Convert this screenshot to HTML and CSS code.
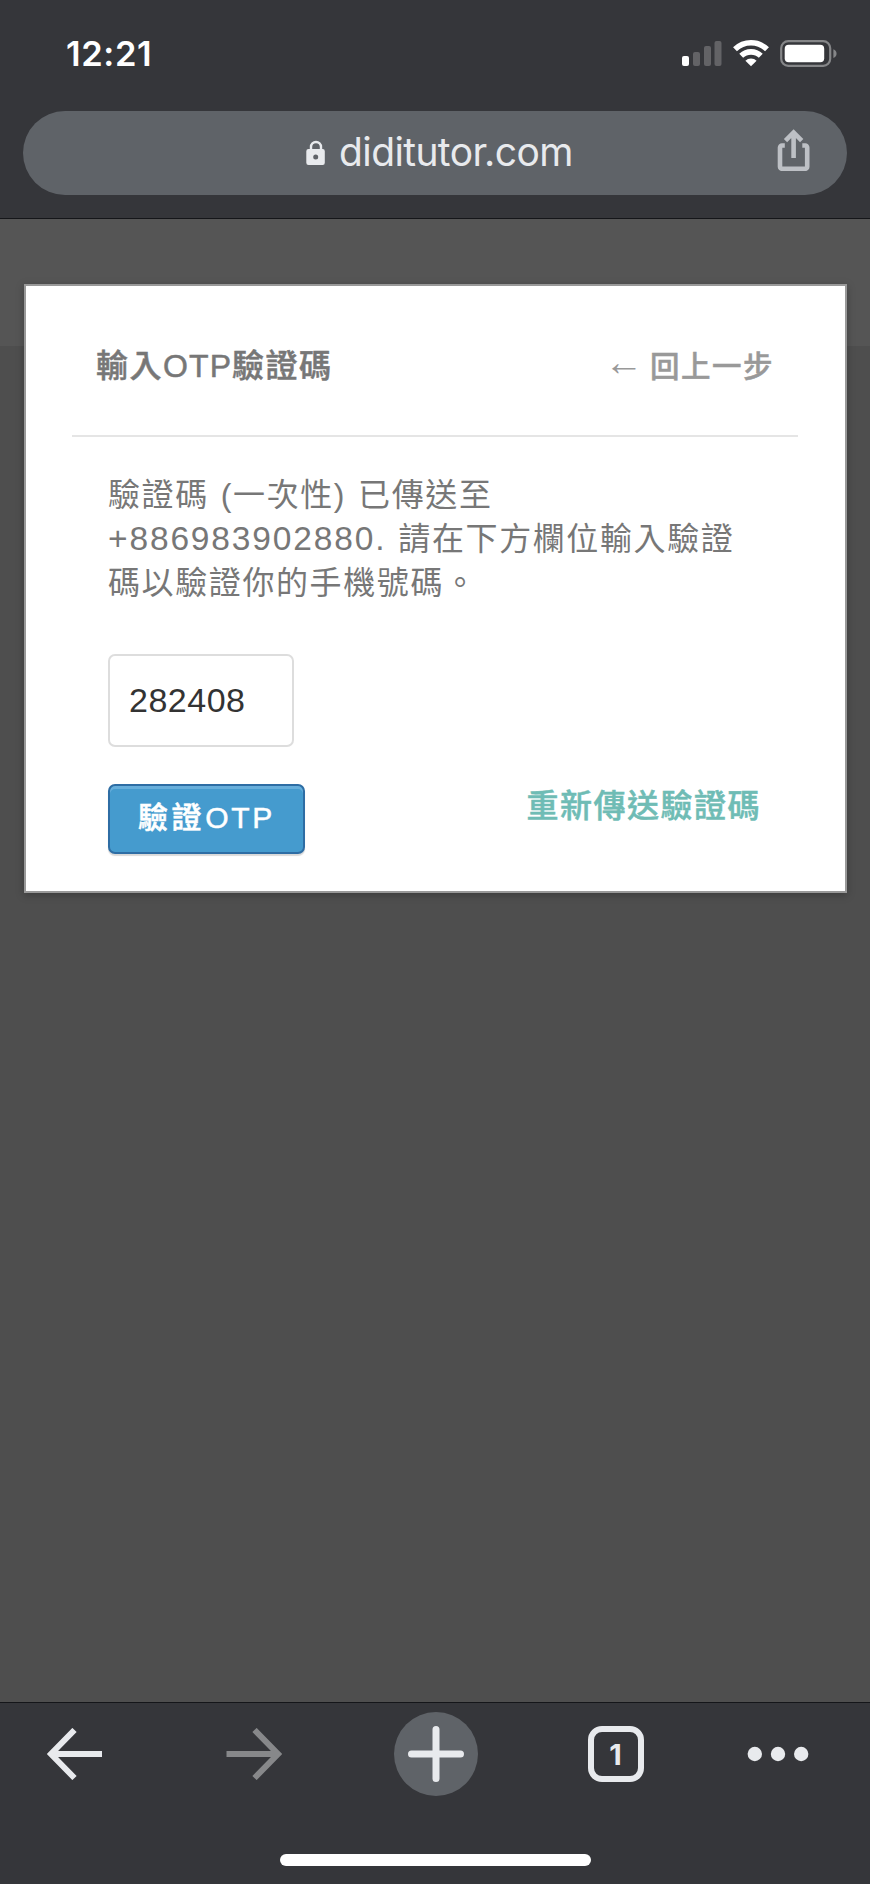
FILE: index.html
```html
<!DOCTYPE html>
<html lang="zh-Hant">
<head>
<meta charset="utf-8">
<title>diditutor.com</title>
<link rel="stylesheet" href="styles.css">
</head>
<body>
<div class="phone">
  <header class="browser-top">
    <div class="status">
      <span class="time">12:21</span>
      <div class="status-icons">
        <svg class="signal" width="41" height="28" viewBox="0 0 41 28">
          <rect x="0" y="16" width="7" height="10" rx="2" fill="#fff"/>
          <g fill="#636366"><rect x="11" y="12" width="7" height="14" rx="2"/><rect x="22" y="6" width="7" height="20" rx="2"/><rect x="32.5" y="1" width="7" height="25" rx="2"/></g>
        </svg>
        <svg class="wifi" width="36" height="28" viewBox="0 0 36 28">
          <g fill="none" stroke="#fff" stroke-width="5.6"><path d="M2 9.3a23 23 0 0 1 32 0"/><path d="M8.2 15.8a14.2 14.2 0 0 1 19.6 0"/></g>
          <path d="M18 26.2l-5.6-5.5a8 8 0 0 1 11.2 0z" fill="#fff"/>
        </svg>
        <svg class="battery" width="58" height="28" viewBox="0 0 58 28">
          <rect x="1.2" y="1.2" width="49" height="24.6" rx="7" fill="none" stroke="#858688" stroke-width="2.2"/>
          <rect x="4.7" y="4.8" width="39.5" height="17.4" rx="4" fill="#fff"/>
          <path d="M53.4 9.2c4.2 1.6 4.2 7.2 0 8.8z" fill="#858688"/>
        </svg>
      </div>
    </div>
    <div class="address">
      <svg class="lock" width="20" height="26" viewBox="0 0 20 26">
        <path d="M5 11V7a5 5 0 0 1 10 0v4" fill="none" stroke="#e8eaed" stroke-width="2.4"/>
        <path fill-rule="evenodd" fill="#e8eaed" d="M2.5 9h14a2.2 2.2 0 0 1 2.3 2.2v11.6a2.2 2.2 0 0 1-2.3 2.2h-14A2.2 2.2 0 0 1 .3 22.8V11.2A2.2 2.2 0 0 1 2.5 9zM9.7 14.4a2.5 2.5 0 1 0 0 5 2.5 2.5 0 0 0 0-5z"/>
      </svg>
      <span class="host">diditutor.com</span>
      <svg class="share" width="34" height="42" viewBox="0 0 34 42" fill="none" stroke="#bdc0c5" stroke-width="4.6">
        <path d="M7.8 16.5H5a2 2 0 0 0-2 2v19.3a2 2 0 0 0 2 2h23.2a2 2 0 0 0 2-2V18.5a2 2 0 0 0-2-2h-2.9"/>
        <path d="M16.6 29V4M8.5 11.6l8.1-8.2 8.1 8.2"/>
      </svg>
    </div>
  </header>
  <main class="page">
    <section class="modal">
      <div class="modal-head">
        <h1 class="title">輸入<span class="title-latin">OTP</span>驗證碼</h1>
        <a class="back"><span class="back-arrow">←</span>回上一步</a>
      </div>
      <div class="modal-body">
        <p class="message">驗證碼 (一次性) 已傳送至<br><span class="number">+886983902880.</span> 請在下方欄位輸入驗證<br>碼以驗證你的手機號碼。</p>
        <input class="code" type="text" value="282408">
        <div class="actions">
          <button class="verify" type="button">驗證<span class="verify-latin">OTP</span></button>
          <a class="resend">重新傳送驗證碼</a>
        </div>
      </div>
    </section>
  </main>
  <footer class="browser-bottom">
    <nav class="tools">
      <svg class="nav-back" width="56" height="52" viewBox="0 0 56 52" fill="none" stroke="#e8eaed" stroke-width="6"><path d="M56 26H6M28.5 2L5 26l23.5 24"/></svg>
      <svg class="nav-forward" width="56" height="52" viewBox="0 0 56 52" fill="none" stroke="#87888a" stroke-width="6"><path d="M.5 26H51M28.5 2L52 26 28.5 50"/></svg>
      <span class="new-tab"><svg width="56" height="56" viewBox="0 0 56 56" stroke="#e8eaed" stroke-width="7" stroke-linecap="round"><path d="M28 3.5v49M3.5 28h49"/></svg></span>
      <span class="tab-count">1</span>
      <svg width="62" height="16" viewBox="0 0 62 16" fill="#e8eaed"><circle cx="7.8" cy="8" r="7.2"/><circle cx="31" cy="8" r="7.2"/><circle cx="54.2" cy="8" r="7.2"/></svg>
    </nav>
    <div class="home-bar"></div>
  </footer>
</div>
</body>
</html>
```
FILE: styles.css
```css
* { box-sizing: border-box; }
body { margin: 0; background: #35363a; font-family: "Liberation Sans", "Noto Sans CJK TC", sans-serif; }
svg { display: block; flex: none; }
.phone { width: 870px; height: 1884px; display: flex; flex-direction: column; overflow: hidden; }

.browser-top { height: 219px; background: #35363a; border-bottom: 1px solid #151619; }
.status { height: 111px; padding: 40px 32px 0 66px; display: flex; justify-content: space-between; }
.time { font: 600 34.5px/27px Inter, sans-serif; color: #fff; letter-spacing: .6px; }
.status-icons { display: flex; height: 28px; }
.wifi { margin-left: 10px; }
.battery { margin-left: 11px; }
.address { height: 84px; margin: 0 23px; padding: 0 36px 0 283px; border-radius: 42px; background: #5f6368; display: flex; align-items: center; }
.host { margin-left: 13px; padding-bottom: 2px; font: 400 39px/82px Inter, sans-serif; letter-spacing: -.6px; color: #e8eaed; }
.share { margin: 0 0 7px auto; }

.page { flex: 1; padding: 65px 23px 0 24px; background: linear-gradient(#555 0 127px, #4e4e4e 127px); }
.modal { width: 823px; height: 609px; border: 2px solid #999; background: #fff; color: #777; box-shadow: 0 2px 8px rgba(0, 0, 0, .25); }
.modal-head { height: 151px; margin: 0 47px 0 46px; padding: 0 24px; border-bottom: 2px solid #e5e5e5; display: flex; justify-content: space-between; }
.title { margin: 0; font-size: 32px; font-weight: 500; line-height: 160px; letter-spacing: 1.5px; -webkit-text-stroke: .5px; }
.title-latin { letter-spacing: 1.1px; }
.back { display: flex; color: #999; font-size: 29.5px; font-weight: 500; line-height: 161px; letter-spacing: 1.5px; -webkit-text-stroke: .5px; }
.back-arrow { margin-right: 4px; line-height: 154px; font-family: "Liberation Serif", serif; font-size: 29px; transform: scale(1.35, 1.3); transform-origin: right 54%; -webkit-text-stroke: 0; }
.modal-body { padding: 36px 83px 0 82px; }
.message { margin: 0; font-size: 32px; line-height: 44px; letter-spacing: 1.6px; word-spacing: 1.5px; white-space: nowrap; }
.number { font-size: 33.5px; line-height: 1; letter-spacing: 1.85px; }
.code { display: block; width: 186px; height: 93px; margin: 49px 0 0; padding: 0 0 0 19px; border: 2px solid #ddd; border-radius: 7px; background: #fff; color: #333; font: 34px "Liberation Sans", sans-serif; letter-spacing: .5px; outline: none; }
.actions { margin-top: 37px; display: flex; justify-content: space-between; }
.verify { width: 197px; height: 70px; padding: 0 0 8px; border: 2px solid #2e6da4; border-radius: 7px; background: #459bce; box-shadow: inset 0 3px 0 #67aedb, 0 2px 1px rgba(0, 0, 0, .15); color: #fff; font: 500 30px "Liberation Sans", "Noto Sans CJK TC", sans-serif; letter-spacing: 3.6px; -webkit-text-stroke: .5px; }
.verify-latin { letter-spacing: 2.7px; }
.resend { margin-right: 1px; color: #6fbcb5; font-size: 32px; font-weight: 500; line-height: 45px; letter-spacing: 1.5px; -webkit-text-stroke: .5px; }

.browser-bottom { height: 182px; background: #35363a; border-top: 1px solid #151619; }
.tools { height: 102px; display: grid; grid-template-columns: 148px 211px 153px 207px 118px; align-items: center; justify-items: center; }
.new-tab { width: 84px; height: 84px; border-radius: 50%; background: #5f6368; display: grid; place-items: center; }
.tab-count { width: 56px; height: 56px; border: 6px solid #e8eaed; border-radius: 14px; color: #e8eaed; font: 700 29px/45px Inter, sans-serif; text-align: center; }
.home-bar { width: 311px; height: 12px; margin: 49px auto 0; border-radius: 6px; background: #fff; }
```
